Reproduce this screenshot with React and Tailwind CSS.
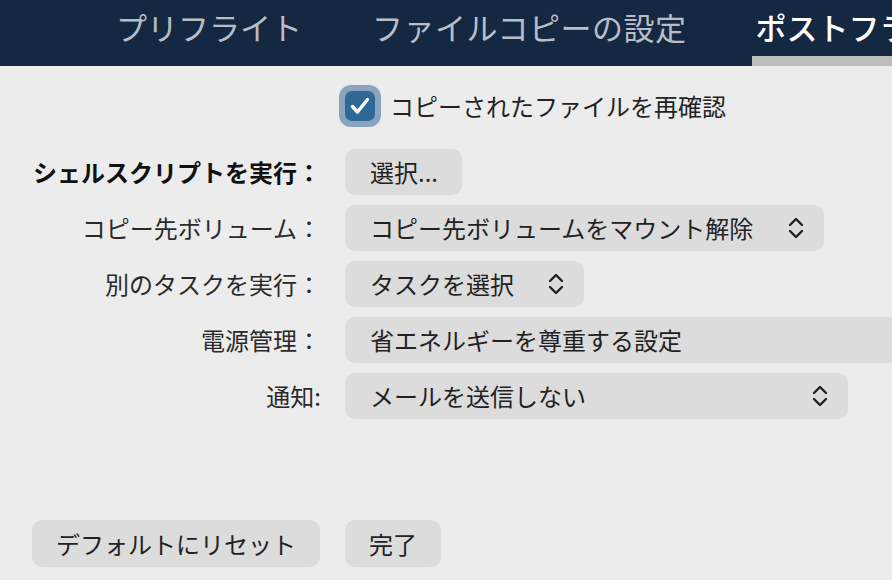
// App.jsx
// Post-flight settings pane — tab bar, options rows, bottom buttons

const font = { fontFamily: '"Noto Sans CJK JP", "Noto Sans", sans-serif' };

// Up/down chevrons shown on popup buttons
const Updown = () => (
  <svg width="16" height="22" viewBox="0 0 16 22" fill="none"
       stroke="#222" strokeWidth="2.4" strokeLinecap="round" strokeLinejoin="round">
    <polyline points="2,8 8,2 14,8" />
    <polyline points="2,14 8,20 14,14" />
  </svg>
);

const rows = [
  { label: 'シェルスクリプトを実行：', bold: true, control: 'button', text: '選択...', w: 'w-[117px]' },
  { label: 'コピー先ボリューム：', control: 'popup', text: 'コピー先ボリュームをマウント解除', w: 'w-[479px]' },
  { label: '別のタスクを実行：', control: 'popup', text: 'タスクを選択', w: 'w-[239px]' },
  { label: '電源管理：', control: 'wide', text: '省エネルギーを尊重する設定', w: 'w-[600px]' },
  { label: '通知:', control: 'popup', text: 'メールを送信しない', w: 'w-[503px]' },
];

export default function App() {
  return (
    <div className="w-[892px] h-[580px] overflow-hidden bg-[#ececec] flex flex-col" style={font}>
      {/* Tab bar */}
      <div className="h-[66px] bg-[#152842] flex items-stretch pl-[116px] gap-[70px] shrink-0 whitespace-nowrap">
        <div className="flex items-start pt-[7px] text-[31px] leading-[40px] text-[#b9bec6]">プリフライト</div>
        <div className="flex items-start pt-[7px] text-[31px] leading-[40px] text-[#b9bec6] tracking-[0.5px]">ファイルコピーの設定</div>
        <div className="flex flex-col pl-[3px] -ml-[4px] w-[200px]">
          <div className="pt-[7px] text-[31px] leading-[40px] text-white font-medium">ポストフライト</div>
          <div className="mt-auto -ml-[3px] h-[10px] bg-[#bdbdbd]" />
        </div>
      </div>

      {/* Re-verify checkbox */}
      <div className="flex items-center mt-[19px] ml-[339px] gap-[9px]">
        <div className="w-[42px] h-[42px] rounded-[12px] bg-[#8aa4bd] flex items-center justify-center">
          <div className="w-[30px] h-[30px] rounded-[7px] bg-[#2d6896] flex items-center justify-center">
            <svg width="22" height="22" viewBox="0 0 22 22" fill="none" stroke="#fff"
                 strokeWidth="3.4" strokeLinecap="round" strokeLinejoin="round">
              <polyline points="3.5,11.5 8.5,17 18.5,4.5" />
            </svg>
          </div>
        </div>
        <span className="text-[24px] text-[#222]">コピーされたファイルを再確認</span>
      </div>

      {/* Option rows */}
      <div className="flex flex-col gap-[10px] mt-[22px]">
        {rows.map((r) => (
          <div key={r.label} className="flex items-center gap-[24px] h-[46px]">
            <div className={`w-[321px] shrink-0 text-right text-[24px] whitespace-nowrap ${r.bold ? 'font-bold text-[#111]' : 'text-[#2a2a2a]'}`}>
              {r.label}
            </div>
            <div className={`${r.w} shrink-0 h-[46px] rounded-[10px] bg-[#dcdcdc] flex items-center justify-between pl-[25px] pr-[20px] text-[24px] text-[#222] whitespace-nowrap`}>
              <span>{r.text}</span>
              {r.control === 'popup' && <Updown />}
            </div>
          </div>
        ))}
      </div>

      {/* Bottom buttons */}
      <div className="mt-auto mb-[13px] flex gap-[25px] pl-[32px]">
        <button className="w-[288px] h-[47px] rounded-[10px] bg-[#dcdcdc] text-[24px] text-[#222]">デフォルトにリセット</button>
        <button className="w-[96px] h-[47px] rounded-[10px] bg-[#dcdcdc] text-[24px] text-[#222]">完了</button>
      </div>
    </div>
  );
}
